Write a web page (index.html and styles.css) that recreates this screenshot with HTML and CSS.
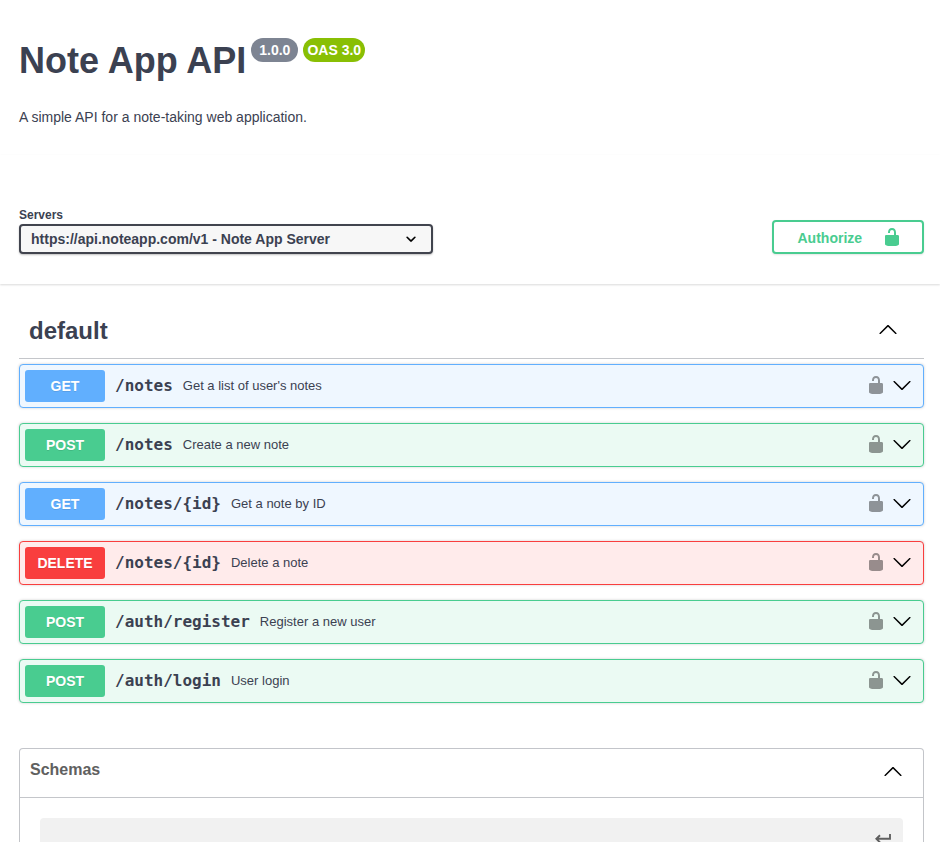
FILE: index.html
```html
<!DOCTYPE html>
<html lang="en">
<head>
<meta charset="utf-8">
<title>Note App API</title>
<link rel="stylesheet" href="styles.css">
</head>
<body>
<svg class="defs" width="0" height="0">
  <symbol id="unlocked" viewBox="0 0 20 20"><path d="M15.8 8H14V5.6C14 2.703 12.665 1 10 1 7.334 1 6 2.703 6 5.6V6h2v-.801C8 3.754 8.797 3 10 3c1.203 0 2 .754 2 2.199V8H4c-.553 0-1 .646-1 1.199V17c0 .549.428 1.139.951 1.307l1.197.387C5.672 18.861 6.55 19 7.1 19h5.8c.549 0 1.428-.139 1.951-.307l1.196-.387c.524-.167.953-.757.953-1.306V9.199C17 8.646 16.352 8 15.8 8z"/></symbol>
  <symbol id="up" viewBox="0 0 20 20"><path d="M 17.418 14.908 C 17.69 15.176 18.127 15.176 18.397 14.908 C 18.667 14.64 18.668 14.207 18.397 13.939 L 10.489 6.109 C 10.219 5.841 9.782 5.841 9.51 6.109 L 1.602 13.939 C 1.332 14.207 1.332 14.64 1.602 14.908 C 1.873 15.176 2.311 15.176 2.581 14.908 L 10 7.767 L 17.418 14.908 Z"/></symbol>
  <symbol id="down" viewBox="0 0 20 20"><path d="M17.418 6.109c.272-.268.709-.268.979 0s.271.701 0 .969l-7.908 7.83c-.27.268-.707.268-.979 0l-7.908-7.83c-.27-.268-.27-.701 0-.969.271-.268.709-.268.979 0L10 13.25l7.418-7.141z"/></symbol>
  <symbol id="small-down" viewBox="0 0 20 20"><path d="M13.418 7.859c.271-.268.709-.268.978 0 .27.268.272.701 0 .969l-3.908 3.83c-.27.268-.707.268-.979 0l-3.908-3.83c-.27-.267-.27-.701 0-.969.271-.268.709-.268.978 0L10 11l3.418-3.141z"/></symbol>
</svg>

<header class="info">
  <h1 class="title">Note App API</h1>
  <span class="badge version">1.0.0</span>
  <span class="badge oas">OAS 3.0</span>
</header>
<p class="description">A simple API for a note-taking web application.</p>

<section class="scheme">
  <div class="servers">
    <span class="servers-label">Servers</span>
    <div class="select"><span>https://api.noteapp.com/v1 - Note App Server</span><svg class="icon"><use href="#small-down"/></svg></div>
  </div>
  <button class="authorize"><span>Authorize</span><svg class="icon"><use href="#unlocked"/></svg></button>
</section>

<main>
  <h3 class="tag"><span>default</span><svg class="icon"><use href="#up"/></svg></h3>
  <div class="ops">
    <div class="op get"><span class="method">GET</span><span class="path">/notes</span><span class="summary">Get a list of user's notes</span><svg class="icon lock"><use href="#unlocked"/></svg><svg class="icon"><use href="#down"/></svg></div>
    <div class="op post"><span class="method">POST</span><span class="path">/notes</span><span class="summary">Create a new note</span><svg class="icon lock"><use href="#unlocked"/></svg><svg class="icon"><use href="#down"/></svg></div>
    <div class="op get"><span class="method">GET</span><span class="path">/notes/{id}</span><span class="summary">Get a note by ID</span><svg class="icon lock"><use href="#unlocked"/></svg><svg class="icon"><use href="#down"/></svg></div>
    <div class="op delete"><span class="method">DELETE</span><span class="path">/notes/{id}</span><span class="summary">Delete a note</span><svg class="icon lock"><use href="#unlocked"/></svg><svg class="icon"><use href="#down"/></svg></div>
    <div class="op post"><span class="method">POST</span><span class="path">/auth/register</span><span class="summary">Register a new user</span><svg class="icon lock"><use href="#unlocked"/></svg><svg class="icon"><use href="#down"/></svg></div>
    <div class="op post"><span class="method">POST</span><span class="path">/auth/login</span><span class="summary">User login</span><svg class="icon lock"><use href="#unlocked"/></svg><svg class="icon"><use href="#down"/></svg></div>
  </div>
  <section class="models">
    <h4 class="models-head"><span>Schemas</span><svg class="icon"><use href="#up"/></svg></h4>
    <div class="model"><svg class="return" viewBox="0 0 16 10"><path d="M15 0v4.800H1.500M5 1.200L1.300 4.800L5 8.400"/></svg></div>
  </section>
</main>
</body>
</html>
```
FILE: styles.css
```css
* { box-sizing: border-box; }
body { display: flex; flex-direction: column; margin: 0; height: 842px; background: #fff; color: #3b4151; font-family: "Liberation Sans", Arial, sans-serif; font-size: 14px; }
.defs { display: block; flex: none; }
.icon { width: 20px; height: 20px; flex: none; fill: #000; }

.info { display: flex; align-items: flex-start; padding: 38px 19px 0; }
.title { margin: 2px 5px 0 0; font-size: 36px; line-height: 42px; font-weight: 700; white-space: nowrap; }
.badge { height: 24px; border-radius: 57px; color: #fff; font-size: 14px; font-weight: 700; line-height: 24px; text-align: center; }
.version { width: 47px; background: #7d8492; margin-right: 5px; }
.oas { width: 62px; background: #89bf04; }
.description { margin: 27px 19px 0; line-height: 16px; }

.scheme { display: flex; flex: none; justify-content: space-between; align-items: flex-end; height: 129px; margin-top: 30px; padding: 0 16px 30px 19px; box-shadow: 0 1px 2px rgba(0, 0, 0, .15); }
.servers { width: 414px; }
.servers-label { display: block; font-size: 12px; font-weight: 700; line-height: 14px; margin-bottom: 2px; }
.select { display: flex; align-items: center; justify-content: space-between; height: 30px; padding: 0 10px; border: 2px solid #41444e; border-radius: 4px; background: #f7f7f7; box-shadow: 0 1px 2px rgba(0, 0, 0, .25); font-weight: 700; }
.select .icon { stroke: #000; stroke-width: .2; }
.authorize { display: flex; align-items: center; width: 152px; height: 34px; padding: 0 20px 0 23.5px; justify-content: space-between; border: 2px solid #49cc90; border-radius: 4px; background: #fff; box-shadow: 0 1px 2px rgba(0, 0, 0, .1); color: #49cc90; font: 700 14px "Liberation Sans", Arial, sans-serif; }
.authorize span { padding-top: 2px; }
.authorize .icon { fill: #49cc90; }

main { display: flex; flex: 1; flex-direction: column; min-height: 0; padding: 0 16px 0 19px; }
.tag { display: flex; flex: none; align-items: center; justify-content: space-between; height: 55px; margin: 20px 0 5px; padding: 0 26px 0 10px; border-bottom: 1px solid rgba(59, 65, 81, .3); font-size: 24px; }
.tag .icon { margin-bottom: 4px; }
.ops { display: grid; flex: none; gap: 15px; }
.op { display: flex; align-items: center; height: 44px; padding: 0 11px 0 5px; border: 1px solid; border-radius: 4px; box-shadow: 0 0 3px rgba(0, 0, 0, .19); }
.op .icon { margin-bottom: 2px; }
.get { border-color: #61affe; background: #eff7ff; }
.post { border-color: #49cc90; background: #ebfaf3; }
.delete { border-color: #f93e3e; background: #ffebeb; }
.method { width: 80px; height: 32px; border-radius: 3px; color: #fff; font-weight: 700; line-height: 32px; text-align: center; text-shadow: 0 1px 0 rgba(0, 0, 0, .1); }
.get .method { background: #61affe; }
.post .method { background: #49cc90; }
.delete .method { background: #f93e3e; }
.path { padding: 0 10px 2px; font: 600 16px "DejaVu Sans Mono", monospace; }
.summary { flex: 1; padding-bottom: 2px; font-size: 13px; }
.lock { margin-right: 6px; opacity: .4; }

.models { display: flex; flex: 1; flex-direction: column; min-height: 0; margin-top: 45px; border: 1px solid rgba(59, 65, 81, .3); border-bottom: 0; border-radius: 4px 4px 0 0; }
.models-head { display: flex; flex: none; align-items: center; justify-content: space-between; height: 49px; margin: 0; padding: 0 20px 0 10px; border-bottom: 1px solid rgba(59, 65, 81, .3); color: #606060; font-size: 16px; }
.models-head span { padding-bottom: 6px; }
.models-head .icon { margin-bottom: 4px; }
.model { display: flex; flex: 1; justify-content: flex-end; min-height: 0; margin: 20px 20px 0; padding: 16px 12px 0; overflow: hidden; border-radius: 4px 4px 0 0; background: #f1f1f1; }
.return { flex: none; width: 16px; height: 10px; fill: none; stroke: #606060; stroke-width: 1.9; }
```
